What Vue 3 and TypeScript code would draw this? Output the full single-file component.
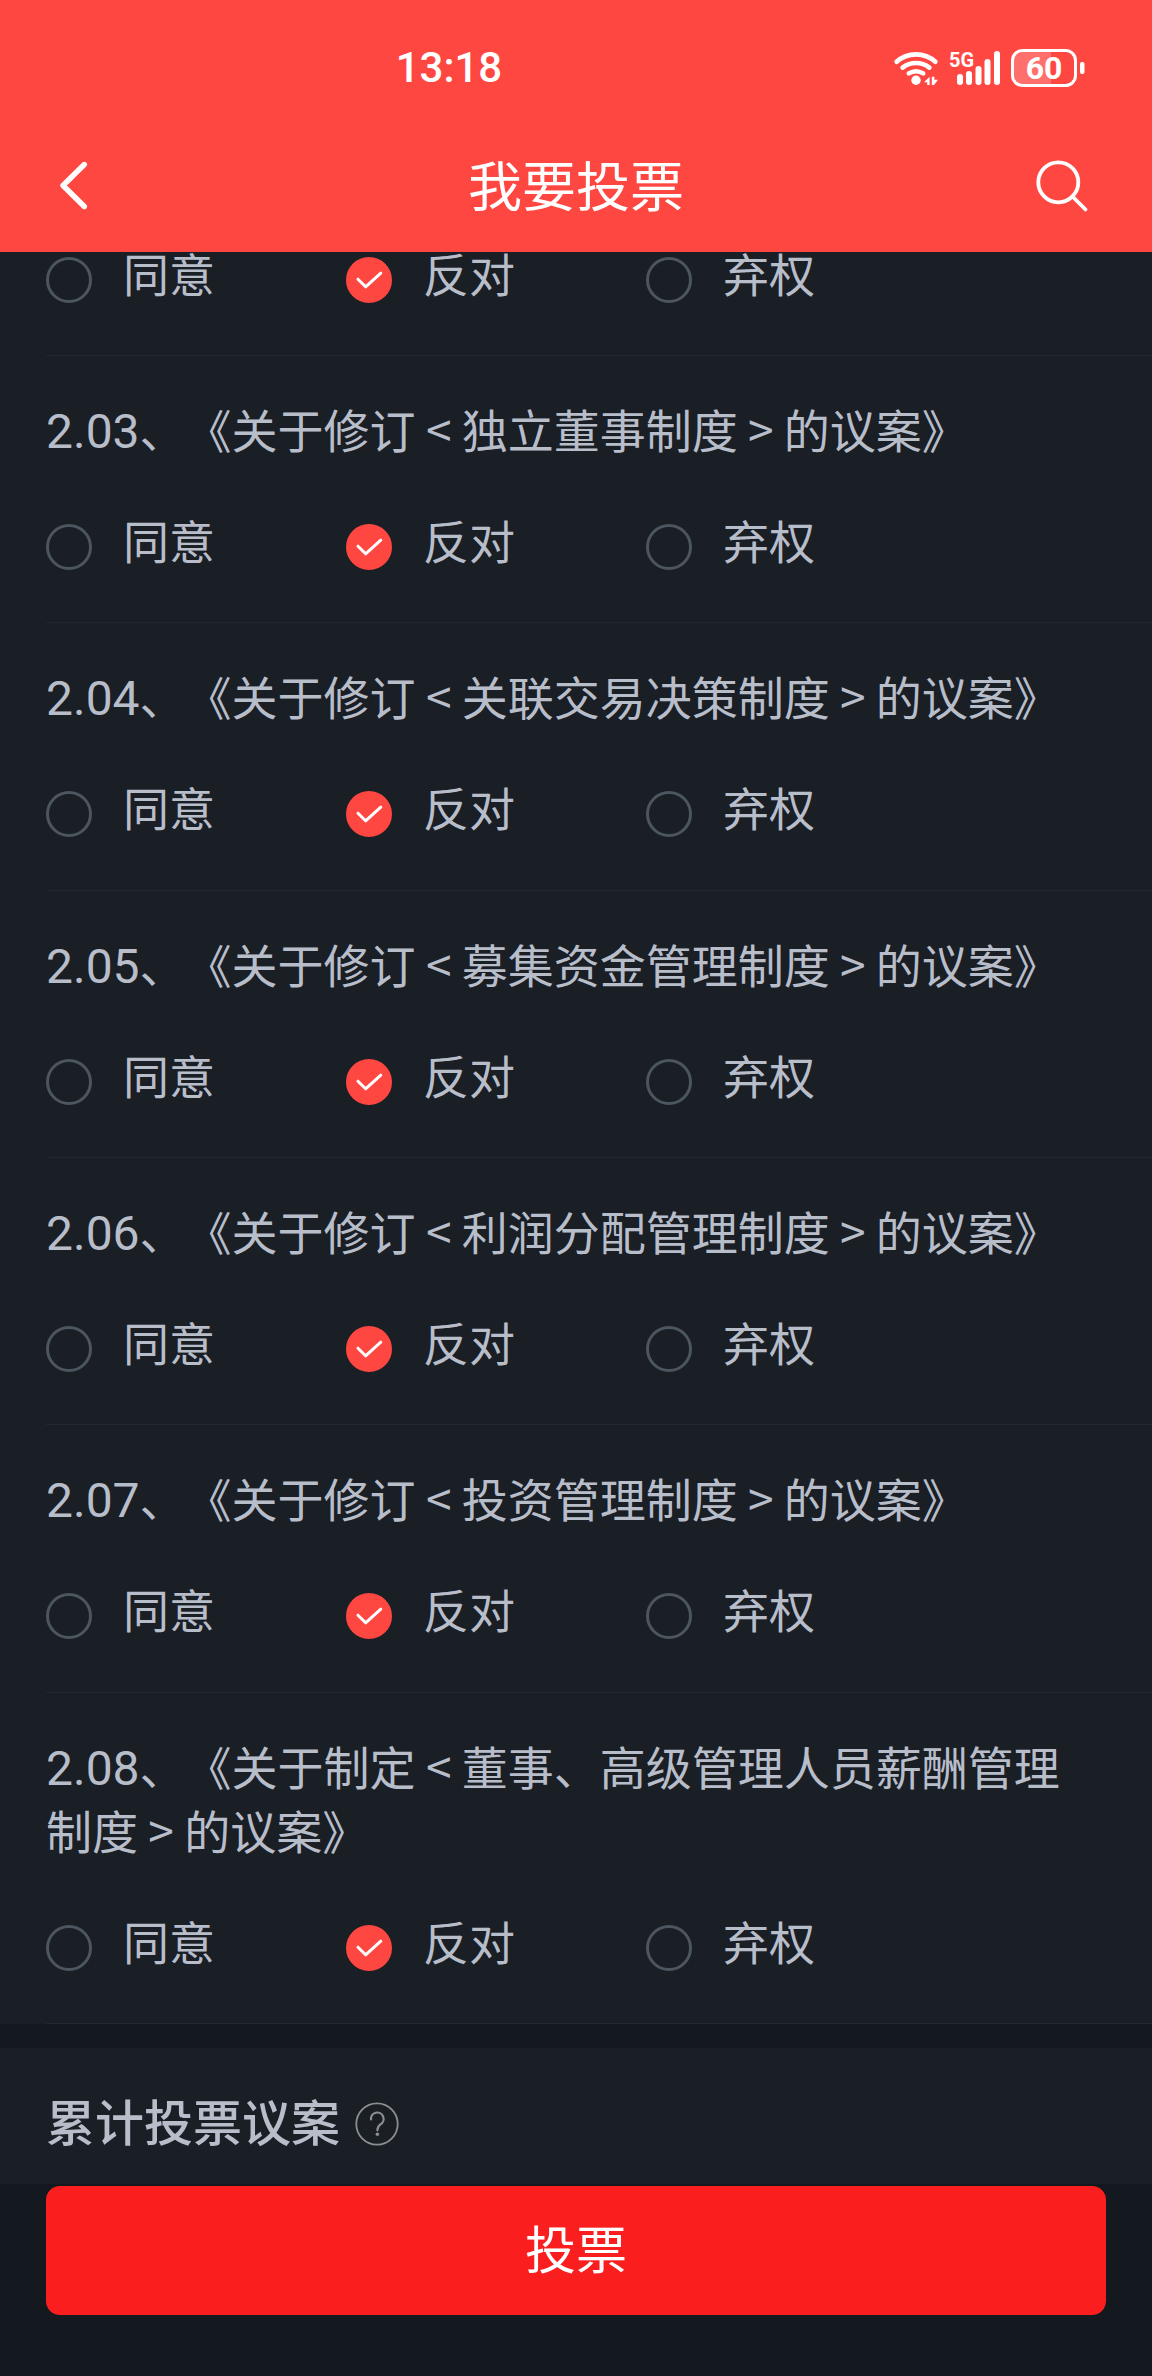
<script setup lang="ts">
import { ref } from 'vue'

type Choice = 'agree' | 'against' | 'abstain'

interface Proposal {
  id: string
  no?: string
  title?: string
  choice: Choice
}

const choices: { value: Choice; label: string }[] = [
  { value: 'agree', label: '同意' },
  { value: 'against', label: '反对' },
  { value: 'abstain', label: '弃权' },
]

const proposals = ref<Proposal[]>([
  { id: 'p202', choice: 'against' },
  { id: 'p203', no: '2.03', title: '《关于修订 < 独立董事制度 > 的议案》', choice: 'against' },
  { id: 'p204', no: '2.04', title: '《关于修订 < 关联交易决策制度 > 的议案》', choice: 'against' },
  { id: 'p205', no: '2.05', title: '《关于修订 < 募集资金管理制度 > 的议案》', choice: 'against' },
  { id: 'p206', no: '2.06', title: '《关于修订 < 利润分配管理制度 > 的议案》', choice: 'against' },
  { id: 'p207', no: '2.07', title: '《关于修订 < 投资管理制度 > 的议案》', choice: 'against' },
  { id: 'p208', no: '2.08', title: '《关于制定 < 董事、高级管理人员薪酬管理制度 > 的议案》', choice: 'against' },
])
</script>

<template>
  <div class="page">
    <header class="top">
      <div class="status">
        <span class="time">13:18</span>
        <div class="indicators">
          <svg width="46" height="34" viewBox="0 0 46 34" fill="none" aria-hidden="true">
            <g stroke="#fff" stroke-width="4.6" stroke-linecap="round">
              <path d="M3.6 10.8A29 29 0 0 1 42.4 10.8" />
              <path d="M9.6 16.6A22 22 0 0 1 36.4 16.6" />
              <path d="M15.8 22.4A14 14 0 0 1 30.2 22.4" />
            </g>
            <circle cx="23" cy="29.3" r="4.7" fill="#fff" />
            <path d="M31 31.2L36.6 25.8V34H34.2V31.2Z" fill="#fff" />
            <path d="M38.8 25.8V34H41L45 28.8H41.4V25.8Z" fill="#fff" />
          </svg>
          <svg width="52" height="50" viewBox="0 -8 52 50" aria-hidden="true">
            <text class="network" x="0" y="16">5G</text>
            <g fill="#fff">
              <rect x="8" y="23" width="6" height="11" rx="3" />
              <rect x="17" y="20" width="6" height="14" rx="3" />
              <rect x="26.500" y="15" width="6" height="19" rx="3" />
              <rect x="35.500" y="8" width="6" height="26" rx="3" />
              <rect x="45" y="0" width="6" height="34" rx="3" />
            </g>
          </svg>
          <svg width="74" height="38" viewBox="0 0 74 38" aria-hidden="true">
            <path d="M11 3H40V35H11A8 8 0 0 1 3 27V11A8 8 0 0 1 11 3Z" fill="#ff6f6b" />
            <rect x="1.500" y="1.500" width="63" height="35" rx="10" fill="none" stroke="#fff" stroke-width="3" />
            <rect x="69" y="13" width="4.500" height="12" rx="2" fill="#fff" />
            <text class="level" x="33" y="30" text-anchor="middle">60</text>
          </svg>
        </div>
      </div>
      <nav class="nav">
        <button type="button" class="icon-button" aria-label="返回">
          <svg width="72" height="56" viewBox="0 0 72 56" fill="none">
            <path d="M38.300 6.500L17 27.500L38.300 48.500" stroke="#fff" stroke-width="5.400" stroke-linecap="round" stroke-linejoin="round" />
          </svg>
        </button>
        <h1 class="title">我要投票</h1>
        <button type="button" class="icon-button" aria-label="搜索">
          <svg width="72" height="56" viewBox="0 0 72 56" fill="none" stroke="#fff" stroke-width="3.800">
            <circle cx="24.300" cy="24.300" r="20" />
            <path d="M38.500 38.500L51.500 51.500" stroke-linecap="round" />
          </svg>
        </button>
      </nav>
    </header>

    <main class="content">
      <form class="list">
        <fieldset v-for="p in proposals" :key="p.id" class="item">
          <legend v-if="p.title" class="question">
            <span class="number">{{ p.no }}</span>、{{ p.title }}
          </legend>
          <div class="options">
            <label v-for="c in choices" :key="c.value" class="option">
              <span class="mark">
                <input v-model="p.choice" type="radio" :name="p.id" :value="c.value" />
                <svg v-if="p.choice === c.value" width="46" height="46" viewBox="0 0 46 46" fill="none" aria-hidden="true">
                  <path d="M12 22.200L19.600 29.800L34.800 16.200" stroke="#fff" stroke-width="3" stroke-linecap="round" stroke-linejoin="round" />
                </svg>
              </span>
              <span>{{ c.label }}</span>
            </label>
          </div>
        </fieldset>
      </form>

      <section class="cumulative">
        <h2>累计投票议案</h2>
        <button type="button" class="help" aria-label="说明">
          <svg width="44" height="44" viewBox="0 0 44 44" fill="none" stroke="#8c8f92">
            <circle cx="22" cy="22" r="20.700" stroke-width="1.800" />
            <path d="M16 17.500A6.300 6.300 0 1 1 25.500 22.300C23.400 23.700 22.400 24.700 22.400 28.300" stroke-width="2.200" stroke-linecap="round" />
            <circle cx="22.400" cy="32.200" r="1.800" fill="#8c8f92" stroke="none" />
          </svg>
        </button>
      </section>
    </main>

    <footer class="footer">
      <button type="button" class="submit">投票</button>
    </footer>
  </div>
</template>

<style>
body {
  background: #14181f;
}
</style>

<style scoped>
.page {
  display: flex;
  flex-direction: column;
  min-height: 100vh;
  background: #14181f;
  color: #b8bdca;
  font-family: "Noto Sans CJK SC", "Noto Sans", sans-serif;
  font-size: 46px;
}

button {
  padding: 0;
  border: 0;
  background: none;
  color: inherit;
  font: inherit;
  cursor: pointer;
}

svg {
  display: block;
}

.top {
  position: relative;
  z-index: 1;
  background: #ff4742;
  color: #fff;
}

.status {
  display: flex;
  align-items: center;
  justify-content: space-between;
  box-sizing: border-box;
  height: 120px;
  padding: 16px 67px 0 34%;
}

.time {
  padding-left: 4px;
  font-family: Roboto, sans-serif;
  font-size: 42px;
  font-weight: 500;
  line-height: 52px;
}

.indicators {
  display: flex;
  align-items: center;
  gap: 10px;
}

.network {
  fill: #fff;
  font-family: Roboto, sans-serif;
  font-size: 20px;
  font-weight: 700;
}

.level {
  fill: #fff;
  font-family: Roboto, sans-serif;
  font-size: 32px;
  font-weight: 700;
}

.nav {
  display: flex;
  align-items: center;
  justify-content: space-between;
  height: 132px;
  padding: 0 46px;
}

.title {
  margin: 0;
  padding-bottom: 4px;
  font-size: 54px;
  font-weight: 400;
  line-height: 64px;
}

.content {
  display: flex;
  flex: 1;
  flex-direction: column;
}

.list {
  display: flex;
  flex: 1;
  flex-direction: column;
  padding-left: 46px;
  background: #1a1e25;
}

.item {
  flex: 1 0 auto;
  min-width: 0;
  margin: 0;
  padding: 0 48px 52px 0;
  border: 0;
  border-bottom: 1px solid #23272e;
}

/* The first proposal is scrolled partly under the header. */
.item:first-child {
  flex-grow: 0;
  margin-top: -11px;
}

.question {
  padding: 40px 0 48px;
  line-height: 64px;
  text-spacing-trim: space-all;
}

.number {
  font-family: Roboto, sans-serif;
  font-size: 48px;
  line-height: 1;
}

.options {
  display: flex;
}

.option {
  display: flex;
  align-items: flex-end;
  gap: 31px;
  width: 300px;
  line-height: 62px;
}

.mark {
  display: grid;
}

.mark > * {
  grid-area: 1 / 1;
}

.mark svg {
  pointer-events: none;
}

.mark input {
  box-sizing: border-box;
  width: 46px;
  height: 46px;
  margin: 0;
  border: 3px solid #4c565f;
  border-radius: 50%;
  appearance: none;
}

.mark input:checked {
  border-color: #ff4742;
  background: #ff4742;
}

.cumulative {
  display: flex;
  align-items: center;
  gap: 15px;
  box-sizing: border-box;
  height: 136px;
  margin-top: 24px;
  padding: 16px 46px 0;
  background: #1a1e25;
}

.cumulative h2 {
  margin: 0;
  padding-bottom: 8px;
  font-size: 49px;
  font-weight: 500;
  line-height: 64px;
}

.footer {
  padding: 2px 46px 61px;
}

.submit {
  width: 100%;
  height: 129px;
  padding-bottom: 8px;
  border-radius: 14px;
  background: #fa1e1e;
  color: #fff;
  font-size: 51px;
}
</style>
